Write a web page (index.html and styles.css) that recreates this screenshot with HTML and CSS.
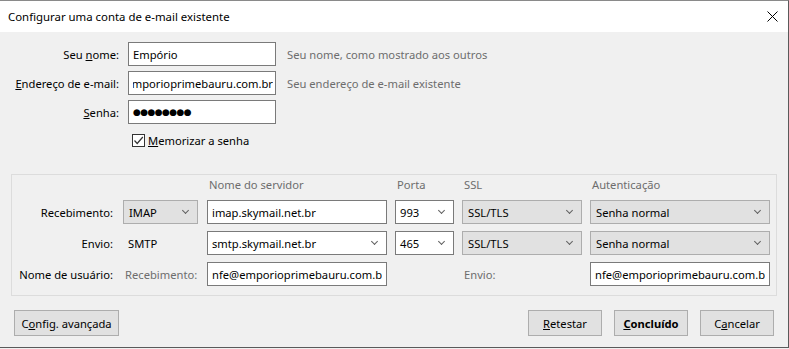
FILE: index.html
```html
<!DOCTYPE html>
<html lang="pt-BR">
<head>
<meta charset="utf-8">
<title>Configurar uma conta de e-mail existente</title>
<link rel="stylesheet" href="styles.css">
</head>
<body>
<div class="window">
  <div class="titlebar">
    <span class="title">Configurar uma conta de e-mail existente</span>
    <span class="close" aria-label="Fechar">
      <svg width="11" height="11" viewBox="0 0 11 11"><path d="M0.5 0.5 L10.5 10.5 M10.5 0.5 L0.5 10.5" stroke="#000" stroke-width="1" fill="none"/></svg>
    </span>
  </div>
  <div class="content">
    <div class="form">
      <label class="lbl" for="nome">Seu <u>n</u>ome:</label>
      <div class="field"><span class="val">Empório</span></div>
      <span class="hint">Seu nome, como mostrado aos outros</span>

      <label class="lbl" for="email"><u>E</u>ndereço de e-mail:</label>
      <input id="email" class="field-input" dir="rtl" value="nfe@emporioprimebauru.com.br">
      <span class="hint">Seu endereço de e-mail existente</span>

      <label class="lbl"><u>S</u>enha:</label>
      <div class="field"><span class="val dots">●●●●●●●●</span></div>
      <span></span>

      <span></span>
      <div class="check-row">
        <span class="checkbox">
          <svg width="11" height="11" viewBox="0 0 11 11"><path d="M1.5 5.5 L4.2 8.5 L9.8 2" stroke="#333" stroke-width="1.2" fill="none"/></svg>
        </span>
        <span class="check-text"><u>M</u>emorizar a senha</span>
      </div>
      <span></span>
    </div>

    <div class="group">
      <span></span>
      <span></span>
      <span class="head">Nome do servidor</span>
      <span class="head">Porta</span>
      <span class="head">SSL</span>
      <span class="head">Autenticação</span>

      <span class="glbl">Recebimento:</span>
      <div class="select w-imap"><span>IMAP</span><i class="chev"></i></div>
      <div class="field"><span class="val">imap.skymail.net.br</span></div>
      <div class="combo w-port"><span>993</span><i class="chev"></i></div>
      <div class="select w-ssl"><span>SSL/TLS</span><i class="chev"></i></div>
      <div class="select w-auth"><span>Senha normal</span><i class="chev"></i></div>

      <span class="glbl">Envio:</span>
      <span class="plain">SMTP</span>
      <div class="combo"><span>smtp.skymail.net.br</span><i class="chev"></i></div>
      <div class="combo w-port"><span>465</span><i class="chev"></i></div>
      <div class="select w-ssl"><span>SSL/TLS</span><i class="chev"></i></div>
      <div class="select w-auth"><span>Senha normal</span><i class="chev"></i></div>

      <span class="glbl">Nome de usuário:</span>
      <span class="sub">Recebimento:</span>
      <input class="field-input" value="nfe@emporioprimebauru.com.br">
      <span></span>
      <span class="sub">Envio:</span>
      <input class="field-input" value="nfe@emporioprimebauru.com.br">
    </div>

    <div class="footer">
      <button class="btn btn-adv">C<u>o</u>nfig. avançada</button>
      <span class="spacer"></span>
      <button class="btn"><u>R</u>etestar</button>
      <button class="btn btn-default"><u>C</u>oncluído</button>
      <button class="btn">C<u>a</u>ncelar</button>
    </div>
  </div>
</div>
</body>
</html>
```

FILE: styles.css
```css
* { box-sizing: border-box; }
html, body { margin: 0; padding: 0; background: #f0f0f0; }
body {
  font-family: "Noto Sans", "Open Sans", sans-serif;
  font-size: 11.2px;
  color: #000;
  width: 789px;
  height: 349px;
  overflow: hidden;
}
.window {
  width: 789px;
  height: 348px;
  border-top: 1px solid #8a8a8a;
  border-right: 1px solid #5a5a5a;
  border-bottom: 1px solid #5a5a5a;
  background: #f0f0f0;
  display: flex;
  flex-direction: column;
}
.titlebar {
  height: 31px;
  background: #fff;
  display: flex;
  align-items: center;
  justify-content: space-between;
  padding: 0 10px 0 8px;
}
.title { font-size: 11.4px; line-height: 16px; padding-top: 1px; }
.close { display: flex; width: 11px; height: 11px; }

.content { flex: 1; display: flex; flex-direction: column; }

.form {
  display: grid;
  grid-template-columns: 119px 148px 1fr;
  grid-template-rows: 24px 24px 24px 20px;
  column-gap: 9px;
  row-gap: 5px;
  padding-top: 10px;
  align-items: center;
}
.lbl { text-align: right; white-space: nowrap; }
.hint { color: #6d6d6d; margin-left: 2px; white-space: nowrap; }

.field {
  height: 24px;
  background: #fff;
  border: 1px solid #7a7a7a;
  display: flex;
  align-items: center;
  padding: 0 4px;
  overflow: hidden;
  white-space: nowrap;
}
.field-input {
  height: 24px;
  width: 100%;
  margin: 0;
  font: inherit;
  color: #000;
  background: #fff;
  border: 1px solid #7a7a7a;
  border-radius: 0;
  padding: 0 4px;
  outline: none;
}
.field-input[dir="rtl"] { padding: 0 2px 0 4px; }
.val { flex: none; }
.dots { font-family: "DejaVu Sans", sans-serif; font-size: 9px; letter-spacing: -0.6px; }

.check-row {
  display: flex;
  align-items: center;
  padding-left: 4px;
  padding-top: 3px;
}
.checkbox {
  width: 13px; height: 13px;
  border: 1px solid #333;
  background: #fff;
  display: flex;
  margin-right: 3px;
}

.group {
  margin: 25px 0 0 11px;
  width: 766px;
  height: 122px;
  border: 1px solid #dcdcdc;
  display: grid;
  grid-template-columns: 103px 76px 180px 59px 120px 180px;
  grid-template-rows: 18px 24px 24px 24px;
  column-gap: 8px;
  row-gap: 7px;
  align-items: center;
}
.head { color: #6d6d6d; padding-left: 2px; align-self: end; line-height: 16px; }
.glbl { text-align: right; padding-right: 2px; white-space: nowrap; }
.plain { padding-left: 5px; }
.sub { color: #6d6d6d; padding-left: 2px; white-space: nowrap; }

.select, .combo {
  height: 24px;
  display: flex;
  align-items: center;
  justify-content: space-between;
  padding: 0 9px 0 5px;
  white-space: nowrap;
}
.select { background: #e1e1e1; border: 1px solid #adadad; }
.combo { background: #fff; border: 1px solid #7a7a7a; padding-left: 4px; }
.w-imap { width: 75px; }
.w-port { width: 59px; }
.w-ssl { width: 120px; }
.w-auth { width: 180px; }

.chev {
  width: 5px; height: 5px;
  border-right: 1px solid #606060;
  border-bottom: 1px solid #606060;
  transform: rotate(45deg);
  margin-top: -3px;
  flex: none;
}

.footer {
  display: flex;
  align-items: center;
  padding: 14px 14px 0 14px;
  gap: 12px;
}
.spacer { flex: 1; }
.btn {
  font: inherit;
  color: #000;
  height: 26px;
  width: 74px;
  background: #e1e1e1;
  border: 1px solid #adadad;
  padding: 0;
  margin: 0;
}
.btn-adv { width: 105px; }
.btn-default { font-weight: bold; }
```
